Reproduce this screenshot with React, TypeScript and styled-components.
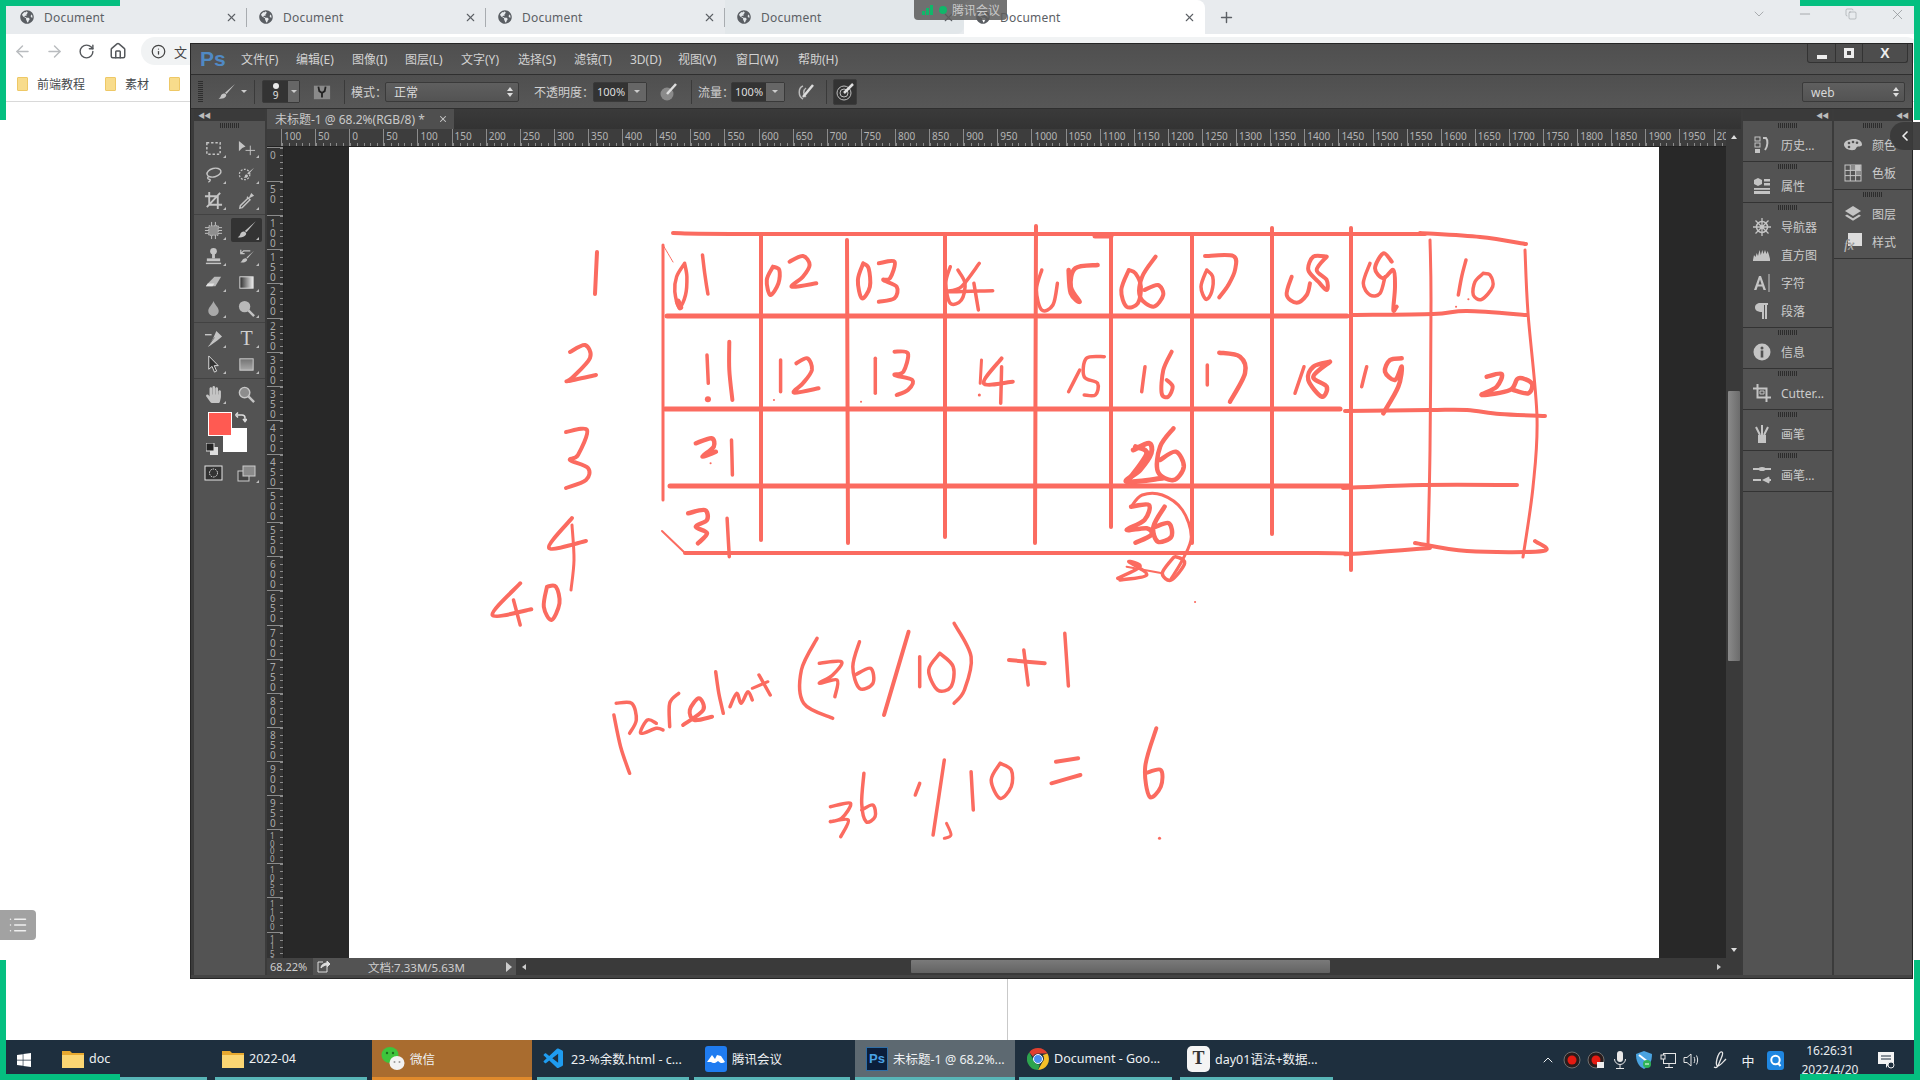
import React from 'react';
import styled, { createGlobalStyle } from 'styled-components';
import { ArrowLeft, ArrowRight, RotateCw, Home, Info, Plus, X, ChevronDown, ChevronLeft, ChevronUp, Minus, Copy, List } from 'lucide-react';
import { FaGlobeAmericas, FaHandPaper, FaWindows } from 'react-icons/fa';
import { VscVscode } from 'react-icons/vsc';

const UI = `"Noto Sans", "Noto Sans CJK SC", sans-serif`;
const GREEN = '#05bf80';
const INK = '#fb6b60';
const ICON = '#c4c4c4';

const GlobalStyle = createGlobalStyle`
  html, body { margin: 0; padding: 0; background: #fff; }
  * { box-sizing: border-box; }
`;

const Page = styled.div`
  position: relative;
  width: 1920px;
  height: 1080px;
  display: flex;
  flex-direction: column;
  overflow: hidden;
  background: #fff;
  font-family: ${UI};
`;

/* green capture corners */
const Corner = styled.div<{ $x: 'left' | 'right'; $y: 'top' | 'bottom'; $dir: 'h' | 'v' }>`
  position: absolute;
  ${(p) => p.$x}: 0;
  ${(p) => p.$y}: 0;
  width: ${(p) => (p.$dir === 'h' ? '120px' : '6px')};
  height: ${(p) => (p.$dir === 'h' ? '6px' : '120px')};
  background: ${GREEN};
  z-index: 20;
`;

/* ---------- chrome ---------- */
const Browser = styled.div`
  position: relative;
  flex: 1;
  min-height: 0;
`;
const TabStrip = styled.div`
  height: 34px;
  display: flex;
  padding-left: 8px;
  background: #e8ebee;
`;
const Tab = styled.div<{ $active?: boolean; $hover?: boolean }>`
  position: relative;
  width: ${(p) => (p.$active ? '241px' : '239px')};
  height: 34px;
  display: flex;
  align-items: center;
  gap: 10px;
  padding: 0 9px 0 12px;
  font-size: 12px;
  color: #5c6065;
  background: ${(p) => (p.$active ? '#fff' : p.$hover ? '#e2e7ea' : 'transparent')};
  border-radius: ${(p) => (p.$active ? '8px 8px 0 0' : '0 0 8px 0')};
  svg.fav { flex: none; color: #5a5e63; }
`;
const TabTitle = styled.span`
  flex: 1;
  letter-spacing: 0.2px;
`;
const TabSep = styled.i`
  position: absolute;
  right: 0;
  top: 8px;
  width: 1px;
  height: 19px;
  background: #a8acb0;
`;
const NewTab = styled.div`
  width: 42px;
  display: flex;
  align-items: center;
  justify-content: center;
  color: #5c6065;
`;
const WinControls = styled.div`
  margin-left: auto;
  display: flex;
  height: 28px;
`;
const WinControl = styled.div`
  width: 46px;
  display: flex;
  align-items: center;
  justify-content: center;
  color: #8a8d90;
`;
const MeetingTip = styled.div`
  position: absolute;
  left: 914px;
  top: 0;
  width: 93px;
  height: 20px;
  display: flex;
  align-items: center;
  gap: 5px;
  padding-left: 8px;
  background: rgba(92, 92, 92, 0.86);
  border-radius: 0 0 4px 4px;
  color: #c9c9c9;
  font-size: 12px;
  z-index: 3;
`;
const GreenDot = styled.i`
  width: 8px;
  height: 8px;
  border-radius: 50%;
  background: #10b76a;
`;
const Toolbar = styled.div`
  height: 36px;
  display: flex;
  align-items: center;
  padding: 0 0 2px 6px;
  background: #fff;
  color: #5f6368;
`;
const NavBtn = styled.div<{ $off?: boolean }>`
  width: 32px;
  display: flex;
  justify-content: center;
  color: ${(p) => (p.$off ? '#b9bcbf' : '#55585c')};
`;
const AddressPill = styled.div`
  flex: 1;
  height: 28px;
  margin-left: 7px;
  display: flex;
  align-items: center;
  gap: 8px;
  padding-left: 10px;
  border-radius: 14px;
  background: #f1f3f4;
  font-size: 13px;
  color: #444;
`;
const Bookmarks = styled.div`
  height: 32px;
  display: flex;
  align-items: center;
  padding: 0 0 4px 17px;
  background: #fff;
  border-bottom: 1px solid #d9d9d9;
  font-size: 12px;
  color: #45484c;
`;
const Bookmark = styled.div<{ $w: number }>`
  width: ${(p) => p.$w}px;
  display: flex;
  align-items: center;
  gap: 9px;
`;
const BookmarkFolder = styled.i`
  width: 11px;
  height: 14px;
  background: #f8dc8c;
  border: 1px solid #eec866;
  border-radius: 1px;
`;
const ContentDivider = styled.div`
  position: absolute;
  left: 1007px;
  top: 978px;
  bottom: 0;
  width: 1px;
  background: #c9c9c9;
`;
const OutlineBtn = styled.div`
  position: absolute;
  left: 0;
  top: 910px;
  width: 36px;
  height: 30px;
  display: flex;
  align-items: center;
  justify-content: center;
  background: #a2a2a2;
  border-radius: 0 4px 4px 0;
  color: #efefef;
`;

/* ---------- photoshop window ---------- */
const PsWindow = styled.div`
  position: absolute;
  left: 190px;
  top: 43px;
  width: 1723px;
  height: 936px;
  display: flex;
  flex-direction: column;
  background: #444;
  border: 1px solid #262626;
  padding-bottom: 3px;
  color: #cdcdcd;
  font-size: 12px;
  z-index: 5;
`;
const MenuBar = styled.div`
  position: relative;
  height: 31px;
  flex: none;
  display: flex;
  align-items: center;
  padding-left: 9px;
  background: linear-gradient(#4f4f4f, #565656);
  border-bottom: 1px solid #2f2f2f;
`;
const PsLogo = styled.span`
  width: 41px;
  font-family: "Liberation Sans", sans-serif;
  font-weight: 700;
  font-size: 21px;
  color: #5089c4;
`;
const MenuItem = styled.span<{ $w: number }>`
  width: ${(p) => p.$w}px;
  font-size: 12px;
  color: #d2d2d2;
  white-space: nowrap;
`;
const PsWinBtns = styled.div`
  position: absolute;
  right: 4px;
  top: 0;
  width: 101px;
  height: 19px;
  display: flex;
  background: #4d4d4d;
  border: 1px solid #333;
  border-top: 0;
  border-radius: 0 0 3px 3px;
`;
const PsWinBtn = styled.div<{ $w: number }>`
  width: ${(p) => p.$w}px;
  display: flex;
  align-items: center;
  justify-content: center;
  border-right: 1px solid #333;
  color: #eee;
  font-family: "Liberation Sans", sans-serif;
  font-weight: 700;
  font-size: 14px;
  &:last-child { border-right: 0; }
`;
const PsMin = styled.i`
  width: 10px;
  height: 4px;
  margin-top: 7px;
  background: #eee;
`;
const PsMax = styled.i`
  width: 10px;
  height: 10px;
  border: 3px solid #eee;
`;
const OptionsBar = styled.div`
  position: relative;
  height: 34px;
  flex: none;
  display: flex;
  align-items: center;
  padding-left: 7px;
  background: linear-gradient(#4f4f4f, #575757);
  border-bottom: 1px solid #2f2f2f;
`;
const VGrip = styled.i`
  width: 5px;
  height: 22px;
  margin-right: 12px;
  background: repeating-linear-gradient(#2e2e2e 0 1px, transparent 1px 2px);
`;
const OptDivider = styled.i<{ $m?: string }>`
  width: 1px;
  height: 24px;
  margin: ${(p) => p.$m || '0'};
  background: #3a3a3a;
  flex: none;
`;
const OptIcon = styled.div<{ $w: number }>`
  width: ${(p) => p.$w}px;
  flex: none;
  display: flex;
  align-items: center;
  justify-content: center;
`;
const Caret = styled.i`
  width: 0;
  height: 0;
  border-left: 3px solid transparent;
  border-right: 3px solid transparent;
  border-top: 3px solid #ccc;
`;
const BrushPreset = styled.div`
  width: 38px;
  height: 23px;
  margin-left: 7px;
  flex: none;
  display: flex;
  background: #333;
  border: 1px solid #3a3a3a;
  border-radius: 2px;
`;
const BrushPreview = styled.div`
  flex: 1;
  display: flex;
  flex-direction: column;
  align-items: center;
  font-size: 10px;
  line-height: 10px;
  color: #e0e0e0;
  &::before {
    content: '';
    width: 6px;
    height: 6px;
    margin: 2px 0 1px;
    border-radius: 50%;
    background: #e8e8e8;
  }
`;
const BrushCaret = styled.div`
  width: 11px;
  display: flex;
  align-items: center;
  justify-content: center;
  background: #666;
`;
const OptLabel = styled.span<{ $w: number; $pad?: number }>`
  width: ${(p) => p.$w}px;
  padding-left: ${(p) => p.$pad || 0}px;
  flex: none;
  color: #d0d0d0;
  white-space: nowrap;
`;
const Select = styled.div<{ $w: number }>`
  width: ${(p) => p.$w}px;
  height: 20px;
  flex: none;
  display: flex;
  align-items: center;
  justify-content: space-between;
  padding: 0 5px 0 8px;
  background: linear-gradient(#5f5f5f, #535353);
  border: 1px solid #3a3a3a;
  border-radius: 2px;
  color: #dcdcdc;
`;
const SelectArrows = styled.span`
  display: flex;
  flex-direction: column;
  gap: 2px;
  &::before, &::after {
    content: '';
    width: 0;
    height: 0;
    border-left: 3px solid transparent;
    border-right: 3px solid transparent;
  }
  &::before { border-bottom: 4px solid #ddd; }
  &::after { border-top: 4px solid #ddd; }
`;
const ValueBox = styled.div`
  width: 54px;
  height: 20px;
  flex: none;
  display: flex;
  background: #333;
  border: 1px solid #3a3a3a;
  border-radius: 2px;
  font-size: 11px;
  line-height: 18px;
  color: #dedede;
`;
const ValueText = styled.span`
  flex: 1;
  padding-left: 3px;
`;
const ValueCaret = styled.span`
  width: 18px;
  display: flex;
  align-items: center;
  justify-content: center;
  background: #666;
`;
const PressedBtn = styled.div`
  width: 24px;
  height: 26px;
  margin-left: 6px;
  flex: none;
  display: flex;
  align-items: center;
  justify-content: center;
  background: #333;
  border: 1px solid #3c3c3c;
  border-radius: 2px;
`;
const WorkspaceSelect = styled(Select)`
  position: absolute;
  right: 7px;
  top: 7px;
  color: #d8d8d8;
`;

const Workspace = styled.div`
  flex: 1;
  min-height: 0;
  display: flex;
  background: #3b3b3b;
  padding-left: 3px;
`;
const CollapseRow = styled.div<{ $left?: boolean }>`
  height: 12px;
  flex: none;
  display: flex;
  align-items: center;
  justify-content: ${(p) => (p.$left ? 'flex-start' : 'flex-end')};
  padding: 0 4px;
  background: #3a3a3a;
  font-size: 7px;
  letter-spacing: -1px;
  color: #bbb;
`;
const ToolColumn = styled.div`
  width: 71px;
  flex: none;
  display: flex;
  flex-direction: column;
  background: #535353;
`;
const Grip = styled.i`
  display: block;
  width: 20px;
  height: 5px;
  margin: 2px auto 3px;
  background: repeating-linear-gradient(to right, #2c2c2c 0 1px, transparent 1px 2px);
`;
const ToolGrip = styled(Grip)`
  margin: 2px auto 7px;
`;
const ToolGrid = styled.div<{ $rule?: boolean }>`
  display: grid;
  grid-template-columns: 33px 33px;
  grid-auto-rows: 26px;
  padding: 0 2px ${(p) => (p.$rule ? '1px' : '0')} 3px;
  margin-bottom: ${(p) => (p.$rule ? '2px' : '0')};
  border-bottom: ${(p) => (p.$rule ? '1px solid #424242' : '0')};
`;
const Tool = styled.div<{ $on?: boolean; $tick?: boolean }>`
  position: relative;
  display: flex;
  align-items: center;
  justify-content: center;
  margin: 1px 1px;
  border-radius: 2px;
  background: ${(p) => (p.$on ? '#333' : 'transparent')};
  color: ${ICON};
  &::after {
    content: '';
    display: ${(p) => (p.$tick ? 'block' : 'none')};
    position: absolute;
    right: 3px;
    bottom: 2px;
    border-left: 3px solid transparent;
    border-bottom: 3px solid #bdbdbd;
  }
`;
const TypeGlyph = styled.span`
  font-family: "Liberation Serif", serif;
  font-size: 20px;
  line-height: 20px;
  color: #d0d0d0;
`;
const Swatches = styled.div`
  position: relative;
  height: 53px;
  flex: none;
`;
const Swatch = styled.i<{ $bg: string; $l: number; $t: number; $z: number }>`
  position: absolute;
  left: ${(p) => p.$l}px;
  top: ${(p) => p.$t}px;
  width: 24px;
  height: 24px;
  background: ${(p) => p.$bg};
  border: 1px solid #fff;
  z-index: ${(p) => p.$z};
`;
const SwapIcon = styled.div`
  position: absolute;
  left: 41px;
  top: 3px;
`;
const DefaultIcon = styled.div`
  position: absolute;
  left: 12px;
  top: 35px;
`;
const BottomTools = styled.div`
  display: grid;
  grid-template-columns: 33px 33px;
  grid-auto-rows: 26px;
  padding: 0 2px 0 3px;
`;

const DocColumn = styled.div`
  flex: 1;
  min-width: 0;
  margin-left: 2px;
  display: flex;
  flex-direction: column;
`;
const DocTabs = styled.div`
  height: 20px;
  flex: none;
  display: flex;
  background: linear-gradient(#3a3a3a, #333);
`;
const DocTab = styled.div`
  width: 187px;
  display: flex;
  align-items: center;
  justify-content: space-between;
  padding: 0 6px 0 8px;
  background: #4f4f4f;
  font-size: 12px;
  color: #c9c9c9;
  white-space: nowrap;
`;
const DocBody = styled.div`
  flex: 1;
  min-height: 0;
  display: flex;
`;
const DocMain = styled.div`
  flex: 1;
  min-width: 0;
  display: flex;
  flex-direction: column;
`;
const HRuler = styled.div`
  height: 18px;
  flex: none;
  display: flex;
  padding-left: 14px;
  overflow: hidden;
  background: #3d3d3d;
  border-bottom: 1px solid #222;
`;
const HRulerCell = styled.span`
  width: 34.11px;
  flex: none;
  padding: 1px 0 0 2px;
  font-size: 10px;
  line-height: 13px;
  color: #b4b4b4;
  border-left: 1px solid #8b8b8b;
  white-space: nowrap;
  background: repeating-linear-gradient(to right, #8b8b8b 0 1px, transparent 1px 6.82px) bottom left / 100% 3px no-repeat;
`;
const CanvasRow = styled.div`
  flex: 1;
  min-height: 0;
  display: flex;
`;
const VRuler = styled.div`
  width: 17px;
  flex: none;
  overflow: hidden;
  background: #333;
  border-right: 1px solid #222;
`;
const VRulerCell = styled.div<{ $tight: boolean }>`
  height: 34.11px;
  padding: 2px 0 0 3px;
  display: flex;
  flex-direction: column;
  font-size: ${(p) => (p.$tight ? '8px' : '10px')};
  line-height: ${(p) => (p.$tight ? '7.5px' : '10px')};
  color: #aaa;
  border-top: 1px solid #8b8b8b;
  background: repeating-linear-gradient(#8b8b8b 0 1px, transparent 1px 6.82px) top right / 3px 100% no-repeat;
`;
const Pasteboard = styled.div`
  flex: 1;
  min-width: 0;
  padding-left: 65px;
  background: #282828;
`;
const Paper = styled.svg`
  display: block;
  width: 1310px;
  height: 811px;
  background: #fff;
`;
const StatusBar = styled.div`
  height: 17px;
  flex: none;
  display: flex;
  align-items: center;
  background: #424242;
  font-size: 11px;
  color: #cfcfcf;
`;
const Zoomed = styled.span`
  width: 46px;
  padding-left: 3px;
  flex: none;
`;
const StatusBlock = styled.div`
  width: 203px;
  height: 100%;
  flex: none;
  display: flex;
  align-items: center;
  background: #535353;
  padding: 0 4px 0 4px;
`;
const StatusText = styled.span`
  margin-left: 37px;
  flex: 1;
  font-size: 11.5px;
`;
const HScroll = styled.div`
  flex: 1;
  height: 100%;
  display: flex;
  align-items: center;
  padding: 0 20px 0 6px;
  background: #3a3a3a;
`;
const HThumb = styled.i`
  width: 419px;
  height: 13px;
  margin: 0 auto 0 385px;
  border-radius: 1px;
  background: linear-gradient(#7a7a7a, #636363);
`;
const ScrollArrow = styled.i<{ $d: 'left' | 'right' | 'up' | 'down' }>`
  width: 0;
  height: 0;
  flex: none;
  ${(p) => (p.$d === 'left' ? 'border-right: 4px solid #ccc; border-top: 3px solid transparent; border-bottom: 3px solid transparent;' : '')}
  ${(p) => (p.$d === 'right' ? 'border-left: 4px solid #ccc; border-top: 3px solid transparent; border-bottom: 3px solid transparent;' : '')}
  ${(p) => (p.$d === 'up' ? 'border-bottom: 4px solid #ddd; border-left: 3px solid transparent; border-right: 3px solid transparent;' : '')}
  ${(p) => (p.$d === 'down' ? 'border-top: 4px solid #ddd; border-left: 3px solid transparent; border-right: 3px solid transparent; margin-bottom: 6px;' : '')}
`;
const StatusArrow = styled(ScrollArrow)`
  border-left-width: 6px;
  border-top-width: 5px;
  border-bottom-width: 5px;
`;
const VScroll = styled.div`
  width: 15px;
  flex: none;
  display: flex;
  flex-direction: column;
  align-items: center;
  padding-top: 6px;
  background: #3a3a3a;
`;
const VThumb = styled.i`
  width: 12px;
  height: 270px;
  margin: 252px 0 auto;
  border-radius: 1px;
  background: linear-gradient(to right, #8a8a8a, #6c6c6c);
`;

const Dock = styled.div<{ $w: number }>`
  width: ${(p) => p.$w}px;
  flex: none;
  margin-left: 2px;
  display: flex;
  flex-direction: column;
  background: #535353;
`;
const PanelGroup = styled.div`
  padding-bottom: 2px;
  border-bottom: 1px solid #333;
`;
const PanelItem = styled.div`
  height: 28px;
  display: flex;
  align-items: center;
  color: #cbcbcb;
  font-size: 12px;
  white-space: nowrap;
`;
const PanelIcon = styled.div`
  width: 38px;
  flex: none;
  display: flex;
  align-items: center;
  justify-content: center;
  color: #cfcfcf;
`;
const DockToggle = styled.div`
  position: absolute;
  right: 0;
  top: 122px;
  width: 30px;
  height: 28px;
  display: flex;
  align-items: center;
  justify-content: center;
  background: rgba(58, 58, 58, 0.95);
  border-radius: 14px 0 0 14px;
  color: #eee;
  z-index: 8;
`;

/* ---------- taskbar ---------- */
const Taskbar = styled.div`
  height: 40px;
  flex: none;
  display: flex;
  align-items: stretch;
  background: #1e2f3e;
  color: #eef1f3;
  font-size: 12.5px;
`;
const StartBtn = styled.div`
  width: 53px;
  display: flex;
  align-items: center;
  padding-left: 16px;
  color: #fff;
`;
const TaskItem = styled.div<{ $w: number; $pad: number; $gap: number; $bg?: string; $line?: string }>`
  width: ${(p) => p.$w}px;
  margin-right: ${(p) => p.$gap}px;
  flex: none;
  display: flex;
  align-items: center;
  gap: 5px;
  padding: 0 0 0 ${(p) => p.$pad}px;
  background: ${(p) => p.$bg || 'transparent'};
  border-bottom: 3px solid ${(p) => p.$line || '#58b5b7'};
  white-space: nowrap;
`;
const TaskPs = styled.span`
  width: 22px;
  height: 24px;
  display: flex;
  align-items: center;
  justify-content: center;
  background: #0b1e3a;
  border: 1px solid #2f6ea5;
  color: #4aa3e6;
  font-family: "Liberation Sans", sans-serif;
  font-weight: 700;
  font-size: 13px;
`;
const TaskTypora = styled.span`
  width: 23px;
  height: 26px;
  display: flex;
  align-items: center;
  justify-content: center;
  background: #f4f4f4;
  border-radius: 5px;
  color: #333;
  font-family: "Liberation Serif", serif;
  font-weight: 700;
  font-size: 18px;
`;
const Tray = styled.div`
  margin-left: auto;
  display: flex;
  align-items: center;
  padding-right: 13px;
`;
const TrayCell = styled.div<{ $w: number }>`
  width: ${(p) => p.$w}px;
  display: flex;
  align-items: center;
  justify-content: center;
  font-size: 13px;
`;
const Clock = styled.div`
  width: 70px;
  margin-left: 5px;
  text-align: center;
  font-size: 12px;
  line-height: 19px;
  color: #e8ecef;
`;

/* ---------- icons ---------- */
const Svg: React.FC<{ s?: number; children: React.ReactNode }> = ({ s = 19, children }) => (
  <svg width={s} height={s} viewBox="0 0 20 20" fill={ICON} stroke="none">
    {children}
  </svg>
);
const line = { fill: 'none', stroke: ICON, strokeWidth: 1.5 };

const BrushGlyph = ({ s = 18 }: { s?: number }) => (
  <Svg s={s}>
    <path d="M18 2 9.500 12 8 10.800z" />
    <path d="M7.800 11.500c1.400.6 2 1.800 1 3-1.200 1.800-4.500 2.800-7.300 2 1.800-.6 2-1.400 2.500-3 .5-1.300 2-2.500 3.800-2z" />
  </Svg>
);

const toolIcons: Record<string, React.ReactNode> = {
  marquee: <Svg><rect x="3" y="4" width="14" height="12" fill="none" stroke={ICON} strokeWidth="1.500" strokeDasharray="2.500 2" /></Svg>,
  move: <Svg><path d="M2 2v11l3.500-3.500L9 8z" /><path d="M14 7v10M9 12h10" {...line} strokeWidth={1} /></Svg>,
  lasso: <Svg><ellipse cx="10.500" cy="8" rx="7.500" ry="4.500" {...line} transform="rotate(-14 10.500 8)" /><path d="M5 12c-2 1.500-1 3 .5 3s1.500 2-1 3" {...line} /></Svg>,
  quick: <Svg><circle cx="8" cy="10" r="5.500" fill="none" stroke={ICON} strokeWidth="1.300" strokeDasharray="2 1.500" /><path d="M18 3l-6 7-1.200-1.200zM10.500 10c1 .5 1.500 1.300.8 2.300-1 1.300-2.700 1.500-4.300 1 1-.5 1-1 1.300-2 .3-1 1.200-1.600 2.200-1.300z" /></Svg>,
  crop: <Svg><path d="M5.500 1v13.500H19M1 5.500h13.500V19M17 2 3 17" {...line} strokeWidth={2} /></Svg>,
  dropper: <Svg><path d="M12 7l-8.500 8.500L3 18l2.500-.5L14 9" {...line} /><path d="M11 5.500l1.500 1.500 2.500-5 3 3-5 2.500 1.500 1.500-1 1L10 6.500z" /></Svg>,
  heal: <Svg><rect x="5" y="5" width="10" height="10" fill="#8f8f8f" stroke={ICON} strokeDasharray="1.500 1" /><path d="M1 7h4M1 10h4M1 13h4M15 7h4M15 10h4M15 13h4M8 1v4M12 1v4M8 15v4M12 15v4" {...line} strokeWidth={1} /></Svg>,
  stamp: <Svg><circle cx="10" cy="4.500" r="3.500" /><rect x="8.500" y="7" width="3" height="5" /><path d="M3 12h14v3H3z" /><rect x="2" y="16.500" width="16" height="1.500" /></Svg>,
  history: <Svg><path d="M18 4l-7 8-1-1z" /><path d="M10 12c1 .8 1 2-.2 3-1.500 1.300-4 1.800-6.300 1 1.500-.5 1.800-1.500 2.300-2.500.7-1.300 2.800-2.300 4.200-1.500z" /><path d="M14 4H7L4 7M4 3v4h4" {...line} strokeWidth={1.300} /></Svg>,
  eraser: <Svg><path d="M11 4h7l-6 10H2l2-3z" fill="#b9b9b9" /><path d="M2 14l2-3h7l-2 3z" fill="#e2e2e2" /></Svg>,
  gradient: <Svg><defs><linearGradient id="tg"><stop offset="0" stopColor="#2c2c2c" /><stop offset="1" stopColor="#eee" /></linearGradient></defs><rect x="3" y="4" width="14" height="12" fill="url(#tg)" stroke="#ddd" /></Svg>,
  drop: <Svg><path d="M10 2c1.500 4 5.500 7 5.500 10.500a5.500 5.500 0 0 1-11 0C4.500 9 8.500 6 10 2z" fill="#a9a9a9" /></Svg>,
  dodge: <Svg><circle cx="8" cy="8" r="6" fill="#b8b8b8" /><path d="M12 12l6 6" {...line} strokeWidth={2.500} /></Svg>,
  pen: <Svg><path d="M1 6h7" {...line} strokeWidth={1.500} /><path d="M13 2l6 6-5 4-7 5-3 2 2-3 4-7zM9 8l-3 8" fill={ICON} /><path d="M11 9 5 17" stroke="#555" strokeWidth=".8" /></Svg>,
  path: <Svg><path d="M5 1v14l3.500-3 2.500 6 2.300-1-2.500-5.800H15z" fill="#333" stroke="#ddd" strokeWidth="1" /></Svg>,
  rect: <Svg><defs><linearGradient id="tr" x2="0" y2="1"><stop offset="0" stopColor="#727272" /><stop offset="1" stopColor="#a8a8a8" /></linearGradient></defs><rect x="3" y="4" width="14" height="12" fill="url(#tr)" stroke="#cfcfcf" /></Svg>,
  zoom: <Svg><circle cx="8" cy="8" r="5.500" fill="#8d8d8d" stroke="#c8c8c8" strokeWidth="1.500" /><path d="M12 12l6 6" {...line} strokeWidth={2.500} /></Svg>,
};

const panelIcons: Record<string, React.ReactNode> = {
  history: <Svg s={20}><rect x="3" y="2" width="5" height="4" fill="none" stroke={ICON} /><rect x="3" y="8" width="5" height="4" fill="none" stroke={ICON} /><rect x="3" y="14" width="5" height="4" /><path d="M11 3h3c2 2 2 8-1 12" {...line} strokeWidth={2} /></Svg>,
  props: <Svg s={20}><path d="M6 2l4 2v4l-4 2-4-2V4z" /><rect x="12" y="3" width="6" height="2.500" /><rect x="12" y="7" width="6" height="2.500" /><rect x="2" y="12" width="16" height="1.800" /><rect x="2" y="15" width="16" height="3" /></Svg>,
  nav: <Svg s={20}><circle cx="10" cy="10" r="5.500" {...line} /><path d="M10 1v18M1 10h18M3.500 3.500l13 13M16.500 3.500l-13 13" {...line} strokeWidth={1.300} /><circle cx="10" cy="10" r="1.800" /></Svg>,
  histo: <Svg s={20}><path d="M1 15l1-5 1.500 2 1.200-4 1.300 3 1.500-6 1.300 5 1.500-5 1.200 4 1.500-4 1.500 4 1.200-3 1.300 4 1 4v2H1z" /></Svg>,
  char: <Svg s={20}><path d="M2 17 7 3h2l5 14h-2.500l-1.200-3.500H5.700L4.500 17zM6.400 11.500h3.200L8 6.500z" /><path d="M17 1v18" {...line} strokeWidth={1} /></Svg>,
  para: <Svg s={20}><path d="M8 2h8v2h-1v14h-2V4h-1v14h-2v-7C6 11 3 9.500 3 6.500S5.500 2 8 2z" /></Svg>,
  info: <Svg s={20}><circle cx="10" cy="10" r="8.500" /><circle cx="10" cy="6" r="1.500" fill="#535353" /><rect x="8.700" y="8.500" width="2.600" height="7" fill="#535353" /></Svg>,
  cutter: <Svg s={20}><path d="M5.500 1v13.500H19M1 5.500h13.500V19" {...line} strokeWidth={2} /><path d="M8 8h4v3H8z" {...line} strokeWidth={1} /></Svg>,
  brushes: <Svg s={20}><path d="M6 11h8v8H6z" /><path d="M8 11 4 3M10 11V1M12 11l4-8" {...line} strokeWidth={2} /></Svg>,
  presets: <Svg s={20}><path d="M1 4h8M12 4h7M1 15h8M15 15h4" {...line} strokeWidth={2} /><ellipse cx="10" cy="4" rx="3.500" ry="2" /><path d="M10 15l7-3.500c1 2.500 1 5 0 7z" /></Svg>,
  color: <Svg s={20}><path d="M10 4c5-.5 9 2 9 5.500 0 2-3 2-4 2-2 0-1.500 3-4 3.500-4.500.8-10-1.500-10-5.500C1 6.500 5 4.500 10 4z" /><circle cx="6" cy="8" r="1.300" fill="#535353" /><circle cx="10" cy="7" r="1.300" fill="#535353" /><circle cx="14" cy="7.800" r="1.300" fill="#535353" /><circle cx="6" cy="12" r="1.300" fill="#535353" /></Svg>,
  swatches: <Svg s={20}><rect x="2" y="2" width="16" height="16" fill="none" stroke={ICON} /><rect x="7.500" y="2" width="5" height="5.300" fill="#8b8b8b" /><rect x="12.700" y="2" width="5" height="5.300" /><rect x="12.700" y="7.500" width="5" height="5" fill="#8b8b8b" /><path d="M7.300 2v16M12.600 2v16M2 7.400h16M2 12.600h16" {...line} strokeWidth={1} /></Svg>,
  layers: <Svg s={20}><path d="M10 2l8 5-8 5-8-5z" /><path d="M4 10.500l6 3.700 6-3.700 2 1.300-8 5-8-5z" /></Svg>,
  styles: <Svg s={20}><rect x="5" y="1" width="14" height="13" fill="#dcdcdc" /><text x="1" y="18" fontFamily="Liberation Serif, serif" fontStyle="italic" fontSize="14" fill="#e6e6e6" stroke="#535353" strokeWidth=".3">fx</text></Svg>,
};

const TrayMic = () => <svg width="14" height="20" viewBox="0 0 14 20"><rect x="4" y="1" width="6" height="11" rx="3" fill="#e8e8e8" /><path d="M1.500 9a5.500 5.500 0 0 0 11 0M7 15v3M3 18.500h8" fill="none" stroke="#e8e8e8" /></svg>;
const TrayRec = ({ badge }: { badge?: boolean }) => (
  <svg width="18" height="18" viewBox="0 0 18 18">
    <circle cx="9" cy="9" r="8" fill="#2a1c1c" stroke="#6f6f6f" />
    <circle cx="9" cy="9" r="4.500" fill="#e51b12" />
    {badge && <rect x="10" y="11" width="7" height="6" fill="#eee" />}
  </svg>
);
const TrayIcons = () => (
  <>
    <TrayCell $w={24}><ChevronUp size={16} strokeWidth={1.500} /></TrayCell>
    <TrayCell $w={24}><TrayRec /></TrayCell>
    <TrayCell $w={24}><TrayRec badge /></TrayCell>
    <TrayCell $w={24}><TrayMic /></TrayCell>
    <TrayCell $w={24}>
      <svg width="18" height="20" viewBox="0 0 18 20"><path d="M9 1l8 3c0 7-2 12-8 15C3 16 1 11 1 4z" fill="#4aa3e0" /><path d="M4 5l9 7" stroke="#fff" strokeWidth="2" /><circle cx="12" cy="14" r="4" fill="#2fb457" /><path d="M10 14h4" stroke="#fff" /></svg>
    </TrayCell>
    <TrayCell $w={24}>
      <svg width="17" height="17" viewBox="0 0 17 17" fill="none" stroke="#e6e6e6"><rect x="3.500" y="1.500" width="12" height="10" /><rect x="1" y="3" width="4" height="4" fill="#1e2f3e" /><path d="M9 12v3M5 15.500h8" /></svg>
    </TrayCell>
    <TrayCell $w={24}>
      <svg width="18" height="16" viewBox="0 0 18 16" fill="none" stroke="#e6e6e6"><path d="M1 5.500h3l4-3.500v12l-4-3.500H1z" /><path d="M11 5c1 2 1 4 0 6M13.500 3.500c1.500 3 1.500 6 0 9" /></svg>
    </TrayCell>
    <TrayCell $w={32}>
      <svg width="16" height="20" viewBox="0 0 16 20" fill="none" stroke="#e6e6e6" strokeWidth="1.300"><path d="M2 17c3 2 4-1 6-6s4-8 2-9-4 3-5 7-1 7 1 7 5-4 8-7" /></svg>
    </TrayCell>
    <TrayCell $w={24}>中</TrayCell>
    <TrayCell $w={30}>
      <svg width="17" height="19" viewBox="0 0 17 19"><rect width="17" height="19" rx="3" fill="#1f86e0" /><circle cx="8.500" cy="9" r="4.200" fill="none" stroke="#fff" strokeWidth="2" /><path d="M11 12l2.500 3" stroke="#fff" strokeWidth="2" /></svg>
    </TrayCell>
  </>
);

function FolderGlyph() {
  return (
    <svg width="22" height="22" viewBox="0 0 22 22">
      <path d="M0 3h8l2 2h12v15H0z" fill="#e8a92f" />
      <path d="M0 7h22v13H0z" fill="#fbd673" />
    </svg>
  );
}
function WeChatGlyph() {
  return (
    <svg width="24" height="26" viewBox="0 0 24 26">
      <ellipse cx="9" cy="9" rx="8.500" ry="8" fill="#3ec53c" />
      <ellipse cx="16" cy="17" rx="7.500" ry="7" fill="#f2f2f2" />
      <circle cx="6" cy="7" r="1.200" fill="#1e6e1e" />
      <circle cx="12" cy="7" r="1.200" fill="#1e6e1e" />
      <circle cx="13.500" cy="16" r="1" fill="#999" />
      <circle cx="18.500" cy="16" r="1" fill="#999" />
    </svg>
  );
}
function MeetingGlyph() {
  return (
    <svg width="22" height="26" viewBox="0 0 22 26">
      <rect width="22" height="26" rx="3" fill="#1f7cf0" />
      <path d="M2 16l5-7 3 4 2-4 4 1 4 6c-3 2-5 1-7-1-2 2-5 3-7 1z" fill="#fff" />
    </svg>
  );
}
function ChromeGlyph() {
  return (
    <svg width="22" height="26" viewBox="0 0 22 26">
      <g transform="translate(0 2)">
        <path d="M11 0a11 11 0 0 1 9.500 5.500H11a5.500 5.500 0 0 0-5 3.300L2.300 4.200A11 11 0 0 1 11 0z" fill="#e0402f" />
        <path d="M20.500 5.500A11 11 0 0 1 11 22l4.200-7.500A5.500 5.500 0 0 0 15.800 7z" fill="#f6c028" />
        <path d="M11 22A11 11 0 0 1 2.300 4.200L6.500 12a5.500 5.500 0 0 0 6.300 4.500z" fill="#2da44e" />
        <circle cx="11" cy="11" r="4.500" fill="#4a8ff0" stroke="#fff" />
      </g>
    </svg>
  );
}

const taskItems: { key: string; w: number; pad: number; gap: number; bg?: string; ln?: string; label: string; icon: React.ReactNode }[] = [
  { key: 'doc', w: 154, pad: 9, gap: 8, label: 'doc', icon: <FolderGlyph /> },
  { key: 'dir', w: 152, pad: 7, gap: 5, label: '2022-04', icon: <FolderGlyph /> },
  { key: 'wx', w: 160, pad: 9, gap: 5, bg: '#a96c2f', ln: '#e08a2c', label: '微信', icon: <WeChatGlyph /> },
  { key: 'vs', w: 152, pad: 5, gap: 5, label: '23-%余数.html - c...', icon: <VscVscode size={24} color="#1f9cf0" /> },
  { key: 'mt', w: 156, pad: 11, gap: 5, label: '腾讯会议', icon: <MeetingGlyph /> },
  { key: 'ps', w: 160, pad: 11, gap: 4, bg: '#5d6971', label: '未标题-1 @ 68.2%...', icon: <TaskPs>Ps</TaskPs> },
  { key: 'ch', w: 153, pad: 8, gap: 8, label: 'Document - Goo...', icon: <ChromeGlyph /> },
  { key: 'ty', w: 153, pad: 7, gap: 0, label: 'day01语法+数据...', icon: <TaskTypora>T</TaskTypora> },
];

/* ---------- the freehand drawing on the canvas ---------- */
type Pt = [number, number];
type Z = 'a' | 'b' | 'c' | 'p';
const toPage: Record<Z, (p: Pt) => Pt> = {
  a: ([x, y]) => [640 + x / 2.24, 220 + y / 3],
  b: ([x, y]) => [1100 + x / 3, 220 + y / 3],
  c: ([x, y]) => [480 + x / 2.24, 560 + y / 3],
  p: (q) => q,
};
const smooth = (pts: Pt[]) => {
  if (pts.length === 1) return `M${pts[0][0]} ${pts[0][1]}l.1 0`;
  let d = `M${pts[0][0].toFixed(1)} ${pts[0][1].toFixed(1)}`;
  for (let i = 0; i < pts.length - 1; i++) {
    const p0 = pts[i - 1] || pts[i];
    const p1 = pts[i];
    const p2 = pts[i + 1];
    const p3 = pts[i + 2] || p2;
    const c1: Pt = [p1[0] + (p2[0] - p0[0]) / 6, p1[1] + (p2[1] - p0[1]) / 6];
    const c2: Pt = [p2[0] - (p3[0] - p1[0]) / 6, p2[1] - (p3[1] - p1[1]) / 6];
    d += `C${c1[0].toFixed(1)} ${c1[1].toFixed(1)} ${c2[0].toFixed(1)} ${c2[1].toFixed(1)} ${p2[0].toFixed(1)} ${p2[1].toFixed(1)}`;
  }
  return d;
};
const strokes: [Z, number, Pt[]][] = [
  // table
  ['p', 4, [[673, 233], [760, 234], [1200, 234], [1425, 234]]],
  ['p', 4, [[1420, 233], [1480, 237], [1526, 244]]],
  ['p', 5, [[667, 316], [1000, 316], [1347, 316]]],
  ['p', 4, [[1353, 315], [1433, 314], [1467, 311], [1527, 315]]],
  ['p', 5, [[665, 409], [1000, 409], [1340, 409]]],
  ['p', 4, [[1345, 411], [1430, 410], [1467, 410], [1500, 414], [1545, 416]]],
  ['p', 5, [[670, 486], [1000, 486], [1350, 486]]],
  ['p', 4, [[1343, 488], [1423, 485], [1517, 485]]],
  ['p', 4, [[685, 553], [1000, 553], [1317, 553], [1350, 554], [1430, 548]]],
  ['p', 4, [[1415, 543], [1467, 551], [1543, 551], [1535, 541]]],
  ['p', 2, [[662, 531], [685, 553]]],
  ['p', 3, [[663, 245], [663, 500]]],
  ['p', 1, [[663, 245], [673, 262]]],
  ['p', 4, [[761, 234], [761, 540]]],
  ['p', 4, [[847, 240], [848, 543]]],
  ['p', 4, [[945, 234], [945, 537]]],
  ['p', 4, [[1036, 226], [1035, 543]]],
  ['p', 4, [[1111, 236], [1111, 527]]],
  ['p', 5, [[1095, 236], [1111, 236]]],
  ['p', 4, [[1192, 234], [1192, 543]]],
  ['p', 4, [[1272, 228], [1272, 534]]],
  ['p', 4, [[1351, 228], [1351, 570]]],
  ['p', 3, [[1430, 240], [1431, 300], [1430, 450], [1428, 545]]],
  ['p', 3, [[1525, 250], [1528, 313], [1537, 417], [1533, 487], [1523, 557]]],
  // row numbers
  ['p', 4, [[597, 252], [595, 294]]],
  ['p', 4, [[570, 352], [585, 345], [590, 358], [572, 378], [568, 381], [596, 375]]],
  ['p', 4, [[566, 432], [587, 430], [578, 455], [570, 460], [588, 468], [586, 480], [566, 488]]],
  ['p', 4, [[572, 518], [549, 548], [586, 541]]],
  ['p', 3, [[572, 525], [574, 560], [571, 590]]],
  ['c', 4, [[90, 70], [28, 165], [115, 148]]],
  ['c', 3.500, [[75, 120], [90, 195]]],
  ['c', 4, [[150, 80], [143, 140], [160, 180], [178, 130], [170, 80], [150, 80]]],
  // 01..06
  ['a', 3.500, [[100, 130], [82, 170], [78, 215], [88, 262], [102, 225], [105, 170], [100, 130]]],
  ['a', 6, [[85, 245], [90, 262]]],
  ['a', 3.500, [[140, 105], [145, 160], [152, 222]]],
  ['a', 4, [[298, 140], [284, 180], [292, 225], [310, 190], [312, 150], [298, 140]]],
  ['a', 4, [[335, 125], [365, 108], [380, 135], [365, 170], [340, 200], [395, 190]]],
  ['a', 4, [[500, 130], [488, 180], [497, 235], [515, 200], [512, 145], [500, 130]]],
  ['a', 4, [[535, 130], [570, 125], [560, 175], [545, 180], [575, 200], [570, 235], [535, 245]]],
  ['a', 3.500, [[695, 140], [685, 190], [695, 250], [720, 240], [728, 190], [712, 150]]],
  ['a', 3.500, [[760, 130], [720, 200], [690, 215], [790, 212]]],
  ['a', 3.500, [[748, 190], [758, 270]]],
  ['a', 3.500, [[900, 150], [888, 210], [900, 270], [925, 255], [935, 190]]],
  ['a', 4.500, [[1025, 135], [975, 145], [965, 200], [985, 245], [965, 220], [960, 150]]],
  ['a', 4, [[1095, 150], [1078, 210], [1090, 260], [1115, 250], [1122, 200], [1110, 160], [1095, 150]]],
  ['a', 4, [[1155, 110], [1125, 170], [1120, 230], [1150, 260], [1172, 225], [1160, 195], [1130, 210]]],
  // 07..10
  ['b', 3.500, [[320, 150], [303, 200], [318, 238], [335, 215], [338, 170], [320, 150]]],
  ['b', 4, [[315, 108], [400, 108], [405, 150], [385, 195], [358, 232]]],
  ['b', 4, [[575, 170], [560, 225], [590, 248], [620, 225], [630, 190]]],
  ['b', 4, [[680, 110], [640, 110], [625, 150], [655, 185], [680, 210], [680, 180], [650, 150], [680, 110]]],
  ['b', 3.500, [[810, 130], [790, 190], [810, 225], [840, 220], [855, 170]]],
  ['b', 4, [[875, 125], [850, 100], [825, 145], [850, 175], [880, 150], [885, 200], [880, 270], [890, 260]]],
  ['b', 3.500, [[1098, 120], [1085, 170], [1075, 225]]],
  ['b', 3.500, [[1150, 160], [1125, 185], [1120, 225], [1145, 238], [1178, 200], [1170, 165], [1150, 160]]],
  ['b', 2, [[1068, 260]]],
  ['b', 2, [[1105, 238]]],
  // 11..15
  ['a', 3.500, [[150, 405], [153, 490]]],
  ['a', 6, [[152, 538]]],
  ['a', 4, [[200, 365], [200, 450], [207, 540]]],
  ['a', 3.500, [[315, 420], [315, 515]]],
  ['a', 2, [[300, 540]]],
  ['a', 4, [[350, 430], [375, 415], [385, 450], [365, 490], [345, 518], [400, 505]]],
  ['a', 3.500, [[527, 415], [527, 520]]],
  ['a', 2, [[495, 545]]],
  ['a', 4, [[570, 395], [600, 400], [590, 455], [570, 465], [610, 480], [600, 510], [575, 525]]],
  ['a', 3, [[765, 420], [762, 490]]],
  ['a', 3, [[760, 525]]],
  ['a', 4, [[810, 415], [770, 490], [835, 485]]],
  ['a', 3.500, [[810, 440], [808, 550]]],
  ['a', 3.500, [[985, 450], [960, 515]]],
  ['a', 3.500, [[1040, 410], [1000, 415], [995, 470], [1025, 490], [1020, 525], [995, 525]]],
  // 16..20
  ['b', 3.500, [[135, 440], [125, 515]]],
  ['b', 4, [[215, 395], [190, 450], [185, 520], [205, 530], [218, 500], [200, 480]]],
  ['b', 3.500, [[322, 435], [322, 495]]],
  ['b', 4.500, [[358, 398], [420, 410], [435, 460], [390, 545]]],
  ['b', 3.500, [[612, 440], [585, 520]]],
  ['b', 4.500, [[690, 425], [640, 440], [625, 480], [665, 530], [680, 500], [640, 470], [690, 425]]],
  ['b', 3.500, [[800, 440], [785, 500]]],
  ['b', 4.500, [[905, 415], [870, 420], [855, 455], [885, 480], [905, 440], [895, 500], [850, 580]]],
  ['b', 4.500, [[1160, 470], [1205, 462], [1190, 500], [1145, 525], [1230, 510], [1255, 475], [1295, 490], [1285, 520], [1240, 510]]],
  // 21, 26, 31, 36
  ['a', 4.500, [[125, 670], [160, 655], [165, 680], [140, 710], [170, 695]]],
  ['a', 3.500, [[205, 660], [207, 765]]],
  ['a', 2, [[158, 730]]],
  ['a', 5, [[1105, 690], [1140, 670], [1145, 700], [1120, 750], [1090, 785], [1170, 775]]],
  ['a', 5, [[1110, 680], [1135, 700], [1100, 770]]],
  ['a', 4.500, [[1195, 625], [1165, 680], [1160, 755], [1195, 780], [1218, 740], [1200, 695], [1165, 720]]],
  ['a', 4.500, [[108, 880], [145, 870], [150, 900], [125, 920], [150, 940], [130, 970]]],
  ['a', 3.500, [[195, 895], [200, 1010]]],
  ['a', 4.500, [[1100, 860], [1140, 855], [1130, 900], [1090, 930], [1135, 925], [1145, 945], [1110, 968]]],
  ['a', 4.500, [[1175, 860], [1150, 920], [1160, 965], [1190, 950], [1185, 910], [1155, 920]]],
  ['a', 3, [[1100, 860], [1125, 825], [1170, 825], [1215, 870], [1235, 950], [1215, 1020], [1190, 1075]]],
  ['a', 3.500, [[1070, 1075], [1120, 1040], [1095, 1025], [1135, 1065], [1075, 1080]]],
  ['a', 3.500, [[1190, 1020], [1170, 1060], [1190, 1080], [1220, 1030], [1200, 1010], [1190, 1020]]],
  ['a', 2, [[1090, 1040], [1170, 1060]]],
  // parseInt (36/10) + 1
  ['c', 3.500, [[300, 465], [315, 560], [335, 640]]],
  ['c', 3.500, [[305, 430], [340, 430], [350, 480], [335, 520]]],
  ['c', 3.500, [[395, 490], [375, 480], [360, 520], [395, 505], [410, 510]]],
  ['c', 3.500, [[425, 500], [425, 430], [445, 400]]],
  ['c', 4, [[455, 495], [500, 450], [490, 415], [470, 450], [480, 480], [520, 470]]],
  ['c', 3.500, [[528, 335], [535, 400], [545, 460]]],
  ['c', 3.500, [[560, 440], [575, 400], [585, 430], [600, 395], [610, 420]]],
  ['c', 3.500, [[625, 345], [650, 405]]],
  ['c', 3, [[610, 385], [645, 365]]],
  ['c', 3.500, [[755, 235], [720, 330], [725, 430], [790, 475]]],
  ['c', 3.500, [[760, 310], [810, 305], [790, 345], [760, 370], [800, 360], [795, 410]]],
  ['c', 3.500, [[850, 245], [835, 320], [850, 385], [880, 370], [875, 325], [840, 345]]],
  ['c', 4, [[960, 215], [905, 465]]],
  ['c', 3.500, [[985, 290], [985, 380]]],
  ['c', 3.500, [[1030, 280], [1005, 330], [1025, 390], [1055, 380], [1060, 320], [1030, 280]]],
  ['c', 3.500, [[1062, 190], [1100, 290], [1085, 390], [1062, 430]]],
  ['c', 4, [[1185, 300], [1265, 310]]],
  ['c', 3.500, [[1218, 270], [1228, 375]]],
  ['c', 3.500, [[1310, 220], [1318, 378]]],
  // 36 % 10 = 6
  ['c', 3.500, [[785, 740], [830, 730], [810, 775], [785, 785], [825, 780], [808, 830]]],
  ['c', 3.500, [[860, 640], [855, 730], [865, 785], [885, 770], [880, 735], [855, 750]]],
  ['c', 3.500, [[985, 670], [975, 705]]],
  ['c', 3.500, [[1040, 600], [1015, 825]]],
  ['c', 3, [[1045, 790], [1055, 825], [1040, 835]]],
  ['c', 3.500, [[1100, 635], [1105, 750]]],
  ['c', 3.500, [[1165, 610], [1145, 660], [1165, 715], [1190, 680], [1190, 630], [1165, 610]]],
  ['c', 4, [[1290, 605], [1340, 595]]],
  ['c', 4, [[1280, 670], [1345, 645]]],
  ['c', 4, [[1515, 505], [1490, 620], [1500, 710], [1525, 680], [1525, 630], [1490, 640]]],
  ['c', 3, [[1522, 835]]],
  ['p', 2, [[1195, 602]]],
];

const hRulerLabels = Array.from({ length: 44 }, (_, i) => Math.abs(-100 + i * 50));
const vRulerLabels = Array.from({ length: 24 }, (_, i) => i * 50);

const topTools = [
  [['marquee', true], ['move', true], ['lasso', true], ['quick', true], ['crop', true], ['dropper', true]],
  [['heal', true], ['brush', true], ['stamp', true], ['history', true], ['eraser', true], ['gradient', true], ['drop', true], ['dodge', true]],
  [['pen', true], ['type', true], ['path', true], ['rect', true]],
  [['hand', true], ['zoom', false]],
] as [string, boolean][][];

const renderTool = (name: string) => {
  if (name === 'brush') return <BrushGlyph s={22} />;
  if (name === 'type') return <TypeGlyph>T</TypeGlyph>;
  if (name === 'hand') return <FaHandPaper size={17} color={ICON} />;
  return toolIcons[name];
};

const col1Panels: [string, string][][] = [
  [['history', '历史…']],
  [['props', '属性']],
  [['nav', '导航器'], ['histo', '直方图'], ['char', '字符'], ['para', '段落']],
  [['info', '信息']],
  [['cutter', 'Cutter…']],
  [['brushes', '画笔']],
  [['presets', '画笔…']],
];
const col2Panels: [string, string][][] = [
  [['color', '颜色'], ['swatches', '色板']],
  [['layers', '图层'], ['styles', '样式']],
];

const menus: [string, number][] = [
  ['文件(F)', 55], ['编辑(E)', 56], ['图像(I)', 53], ['图层(L)', 56], ['文字(Y)', 57], ['选择(S)', 56],
  ['滤镜(T)', 56], ['3D(D)', 48], ['视图(V)', 58], ['窗口(W)', 62], ['帮助(H)', 60],
];

const Panels: React.FC<{ groups: [string, string][][] }> = ({ groups }) => (
  <>
    <CollapseRow>◀◀</CollapseRow>
    {groups.map((g) => (
      <PanelGroup key={g[0][0]}>
        <Grip />
        {g.map(([icon, label]) => (
          <PanelItem key={icon}>
            <PanelIcon>{panelIcons[icon]}</PanelIcon>
            {label}
          </PanelItem>
        ))}
      </PanelGroup>
    ))}
  </>
);

const App: React.FC = () => (
  <Page>
    <GlobalStyle />
    <Browser>
      <TabStrip>
        {[0, 1, 2, 3].map((i) => (
          <Tab key={i} $hover={i === 3}>
            <FaGlobeAmericas className="fav" size={14} />
            <TabTitle>Document</TabTitle>
            <X size={13} strokeWidth={2} />
            {i < 3 && <TabSep />}
          </Tab>
        ))}
        <Tab $active>
          <FaGlobeAmericas className="fav" size={14} />
          <TabTitle>Document</TabTitle>
          <X size={13} strokeWidth={2} />
        </Tab>
        <NewTab><Plus size={17} strokeWidth={2} /></NewTab>
        <WinControls>
          <WinControl><ChevronDown size={16} strokeWidth={1} /></WinControl>
          <WinControl><Minus size={16} strokeWidth={1} /></WinControl>
          <WinControl><Copy size={12} strokeWidth={1} /></WinControl>
          <WinControl><X size={17} strokeWidth={1} /></WinControl>
        </WinControls>
      </TabStrip>
      <MeetingTip>
        <svg width="12" height="10" viewBox="0 0 12 10" fill="#10b76a"><rect y="6" width="3" height="4" /><rect x="4" y="3" width="3" height="7" /><rect x="8" width="3" height="10" /></svg>
        <GreenDot />
        腾讯会议
      </MeetingTip>
      <Toolbar>
        <NavBtn $off><ArrowLeft size={19} strokeWidth={1.800} /></NavBtn>
        <NavBtn $off><ArrowRight size={19} strokeWidth={1.800} /></NavBtn>
        <NavBtn><RotateCw size={17} strokeWidth={2} /></NavBtn>
        <NavBtn><Home size={18} strokeWidth={2} /></NavBtn>
        <AddressPill><Info size={15} strokeWidth={2} />文</AddressPill>
      </Toolbar>
      <Bookmarks>
        <Bookmark $w={88}><BookmarkFolder />前端教程</Bookmark>
        <Bookmark $w={64}><BookmarkFolder />素材</Bookmark>
        <Bookmark $w={40}><BookmarkFolder /></Bookmark>
      </Bookmarks>
      <ContentDivider />
      <OutlineBtn><List size={20} strokeWidth={1.800} /></OutlineBtn>
      <DockToggle><ChevronLeft size={16} strokeWidth={2.500} /></DockToggle>

      <PsWindow>
        <MenuBar>
          <PsLogo>Ps</PsLogo>
          {menus.map(([label, w]) => <MenuItem key={label} $w={w}>{label}</MenuItem>)}
          <PsWinBtns>
            <PsWinBtn $w={28}><PsMin /></PsWinBtn>
            <PsWinBtn $w={27}><PsMax /></PsWinBtn>
            <PsWinBtn $w={44}>X</PsWinBtn>
          </PsWinBtns>
        </MenuBar>
        <OptionsBar>
          <VGrip />
          <OptIcon $w={24}><BrushGlyph s={20} /></OptIcon>
          <OptIcon $w={10}><Caret /></OptIcon>
          <OptDivider $m="0 0 0 5px" />
          <BrushPreset>
            <BrushPreview>9</BrushPreview>
            <BrushCaret><Caret /></BrushCaret>
          </BrushPreset>
          <OptIcon $w={44}>
            <svg width="18" height="18" viewBox="0 0 20 20"><rect x="1" y="3" width="18" height="15" fill="#8a8a8a" /><path d="M6 4l1 5 3 2 3-2 1-5M10 11v5" stroke="#222" strokeWidth="2" fill="none" /></svg>
          </OptIcon>
          <OptDivider $m="0 6px 0 0" />
          <OptLabel $w={34}>模式：</OptLabel>
          <Select $w={134}>正常<SelectArrows /></Select>
          <OptLabel $w={74} $pad={15}>不透明度：</OptLabel>
          <ValueBox><ValueText>100%</ValueText><ValueCaret><Caret /></ValueCaret></ValueBox>
          <OptIcon $w={44}>
            <svg width="20" height="20" viewBox="0 0 20 20"><circle cx="8" cy="12" r="6.500" fill="#8a8a8a" /><path d="M8 12 17 2" stroke="#ddd" strokeWidth="2.500" /></svg>
          </OptIcon>
          <OptDivider $m="0 6px 0 0" />
          <OptLabel $w={33}>流量：</OptLabel>
          <ValueBox><ValueText>100%</ValueText><ValueCaret><Caret /></ValueCaret></ValueBox>
          <OptIcon $w={41}>
            <svg width="20" height="18" viewBox="0 0 20 18" fill="none" stroke="#bbb" strokeWidth="1.500"><path d="M7 3c-5 2-5 10 0 13M10 5c-3 2-3 7 0 9" /><path d="M7 14 17 2" stroke="#ddd" strokeWidth="2.500" /></svg>
          </OptIcon>
          <OptDivider />
          <PressedBtn>
            <svg width="20" height="20" viewBox="0 0 20 20" fill="none" stroke="#bdbdbd"><circle cx="9" cy="11" r="7" /><circle cx="9" cy="11" r="4" /><path d="M9 11 18 2" stroke="#e0e0e0" strokeWidth="2.500" /></svg>
          </PressedBtn>
          <WorkspaceSelect $w={103}>web<SelectArrows /></WorkspaceSelect>
        </OptionsBar>

        <Workspace>
          <ToolColumn>
            <CollapseRow $left>◀◀</CollapseRow>
            <ToolGrip />
            {topTools.map((group, gi) => (
              <ToolGrid key={gi} $rule={gi < 3}>
                {group.map(([name, tick]) => (
                  <Tool key={name} $on={name === 'brush'} $tick={tick}>{renderTool(name)}</Tool>
                ))}
              </ToolGrid>
            ))}
            <Swatches>
              <Swatch $bg="#ff5a52" $l={14} $t={5} $z={2} />
              <Swatch $bg="#fff" $l={29} $t={21} $z={1} />
              <SwapIcon>
                <svg width="12" height="12" viewBox="0 0 12 12" fill="none" stroke="#ddd" strokeWidth="1.500"><path d="M2 4h5c2 0 3 1 3 3v2M.5 4 3 1.500M.5 4 3 6.500M8 8l2 2.500L12 8" /></svg>
              </SwapIcon>
              <DefaultIcon>
                <svg width="12" height="12" viewBox="0 0 12 12"><rect x="4" y="4" width="8" height="8" fill="#ddd" /><rect x="0" y="0" width="8" height="8" fill="#222" stroke="#ddd" /></svg>
              </DefaultIcon>
            </Swatches>
            <BottomTools>
              <Tool>
                <svg width="20" height="16" viewBox="0 0 20 16"><rect x="1" y="1" width="17" height="14" fill="#333" stroke="#e5e5e5" /><circle cx="9.500" cy="8" r="4" fill="none" stroke="#e5e5e5" strokeDasharray="1.500 1" /></svg>
              </Tool>
              <Tool $tick>
                <svg width="20" height="17" viewBox="0 0 20 17"><rect x="1" y="6" width="11" height="10" fill="#444" stroke="#ccc" /><rect x="6" y="1" width="12" height="10" fill="#8a8a8a" stroke="#ccc" /></svg>
              </Tool>
            </BottomTools>
          </ToolColumn>

          <DocColumn>
            <DocTabs>
              <DocTab>未标题-1 @ 68.2%(RGB/8) *<X size={10} strokeWidth={2.500} /></DocTab>
            </DocTabs>
            <DocBody>
              <DocMain>
                <HRuler>
                  {hRulerLabels.map((n, i) => <HRulerCell key={i}>{n}</HRulerCell>)}
                </HRuler>
                <CanvasRow>
                  <VRuler>
                    {vRulerLabels.map((n) => (
                      <VRulerCell key={n} $tight={n >= 1000}>
                        {String(n).split('').map((c, i) => <span key={i}>{c}</span>)}
                      </VRulerCell>
                    ))}
                  </VRuler>
                  <Pasteboard>
                    <Paper viewBox="349 147 1310 811" fill="none" stroke={INK} strokeLinecap="round" strokeLinejoin="round">
                      {strokes.map(([z, w, pts], i) => (
                        <path key={i} d={smooth(pts.map(toPage[z]))} strokeWidth={w} />
                      ))}
                    </Paper>
                  </Pasteboard>
                </CanvasRow>
              </DocMain>
              <VScroll>
                <ScrollArrow $d="up" />
                <VThumb />
                <ScrollArrow $d="down" />
              </VScroll>
            </DocBody>
            <StatusBar>
              <Zoomed>68.22%</Zoomed>
              <StatusBlock>
                <svg width="14" height="13" viewBox="0 0 14 13" fill="none" stroke="#ddd"><path d="M10 7v5H1V2h5" /><path d="M4 8c0-3 3-5 6-5V1l3 3-3 3V5C8 5 6 6 4 8z" fill="#ddd" /></svg>
                <StatusText>文档:7.33M/5.63M</StatusText>
                <StatusArrow $d="right" />
              </StatusBlock>
              <HScroll>
                <ScrollArrow $d="left" />
                <HThumb />
                <ScrollArrow $d="right" />
              </HScroll>
            </StatusBar>
          </DocColumn>

          <Dock $w={89}><Panels groups={col1Panels} /></Dock>
          <Dock $w={78}><Panels groups={col2Panels} /></Dock>
        </Workspace>
      </PsWindow>
    </Browser>

    <Taskbar>
      <StartBtn><FaWindows size={16} /></StartBtn>
      {taskItems.map((t) => (
        <TaskItem key={t.key} $w={t.w} $pad={t.pad} $gap={t.gap} $bg={t.bg} $line={t.ln}>
          {t.icon}
          {t.label}
        </TaskItem>
      ))}
      <Tray>
        <TrayIcons />
        <Clock>16:26:31<br />2022/4/20</Clock>
        <TrayCell $w={42}>
          <svg width="18" height="18" viewBox="0 0 18 18"><path d="M1 1h16v12h-5l-3 4v-4H1z" fill="#f4f4f4" /><path d="M4 5h10M4 8h10" stroke="#1e2f3e" /><circle cx="14" cy="14" r="3" fill="#1e2f3e" stroke="#eee" /></svg>
        </TrayCell>
      </Tray>
    </Taskbar>

    <Corner $x="left" $y="top" $dir="h" />
    <Corner $x="left" $y="top" $dir="v" />
    <Corner $x="right" $y="top" $dir="h" />
    <Corner $x="right" $y="top" $dir="v" />
    <Corner $x="left" $y="bottom" $dir="h" />
    <Corner $x="left" $y="bottom" $dir="v" />
    <Corner $x="right" $y="bottom" $dir="h" />
    <Corner $x="right" $y="bottom" $dir="v" />
  </Page>
);

export default App;
